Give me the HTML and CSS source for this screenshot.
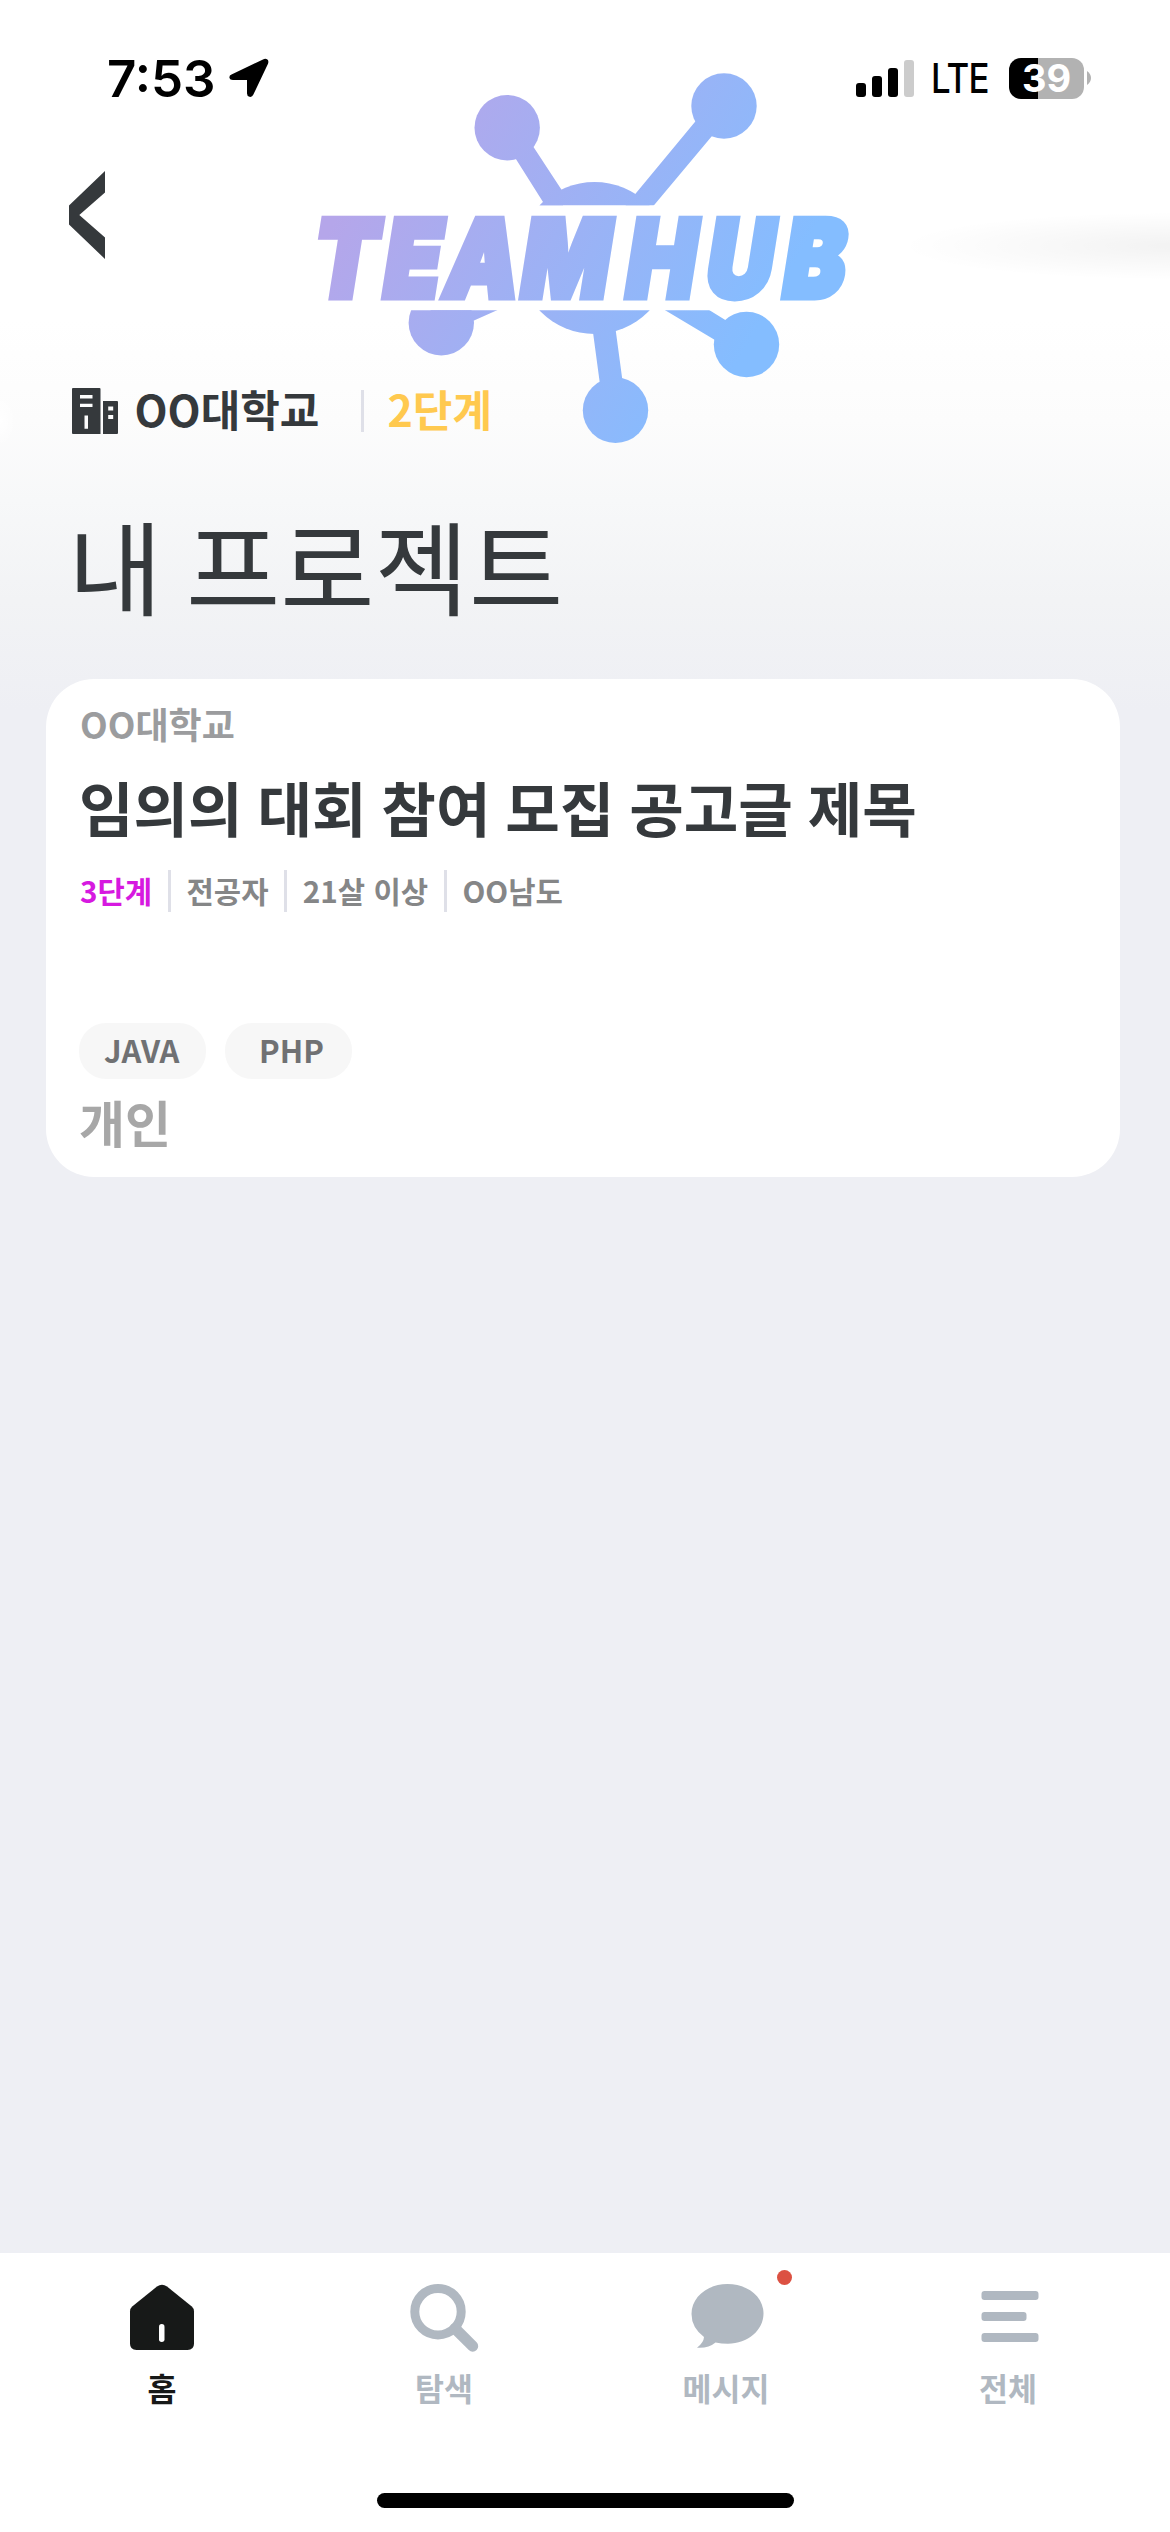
FILE: index.html
```html
<!DOCTYPE html>
<html lang="ko">
<head>
<meta charset="utf-8">
<title>TEAMHUB</title>
<link rel="stylesheet" href="styles.css">
</head>
<body>
<div class="screen">
  <header class="status-bar">
    <div class="status-left">
      <span class="clock">7:53</span>
      <svg class="location" width="40" height="40" viewBox="0 0 40 40"><path d="M2.5 16.6 34 1.4Q36.500 0 38.400 1.500 40 3 39 5.800L24.400 36.500Q23 39.500 20.500 38.800 18 38.300 18 35.500V22H4Q.8 22 .4 19.500 .2 17.600 2.500 16.600Z"/></svg>
    </div>
    <div class="status-right">
      <svg class="signal" width="58" height="37" viewBox="0 0 58 37"><rect y="23" width="10" height="14" rx="3"/><rect x="16" y="16" width="10" height="21" rx="3"/><rect x="32" y="8" width="10" height="29" rx="3"/><rect class="signal-off" x="48" width="10" height="37" rx="3"/></svg>
      <span class="network">LTE</span>
      <span class="battery">39</span>
      <svg class="battery-cap" width="4" height="14" viewBox="0 0 4 14"><path d="M0 0Q4 3 4 7T0 14Z"/></svg>
    </div>
  </header>

  <svg class="logo" width="540" height="380" viewBox="313 68 540 380">
    <defs>
      <linearGradient id="mark" gradientUnits="userSpaceOnUse" x1="346" y1="200" x2="710" y2="410"><stop offset="0" stop-color="#b5a6ea"/><stop offset="1" stop-color="#84bdff"/></linearGradient>
      <linearGradient id="word" gradientUnits="userSpaceOnUse" x1="346" y1="200" x2="710" y2="410" gradientTransform="scale(1.163 1) skewX(9) translate(0 -297)"><stop offset="0" stop-color="#b5a6ea"/><stop offset="1" stop-color="#84bdff"/></linearGradient>
      <clipPath id="bands"><path d="M313 68H853V205.300H313ZM313 310.300H853V448H313Z"/></clipPath>
    </defs>
    <g fill="url(#mark)" clip-path="url(#bands)">
      <circle cx="507.200" cy="127.700" r="32.700"/>
      <circle cx="724" cy="106" r="32.700"/>
      <circle cx="441.300" cy="322.700" r="32.700"/>
      <circle cx="746.500" cy="344.500" r="32.700"/>
      <circle cx="615.500" cy="410.300" r="32.700"/>
      <circle cx="594.500" cy="258" r="76"/>
      <path d="M507 145 525 134 563 192V210H536L543 202ZM704 111 717 130 650 210 622 210ZM425 300H520L474 320.500 441 330ZM648 300H693L735 326 730 349ZM592 325H615L624 392H601Z"/>
    </g>
    <text class="wordmark" fill="url(#word)" stroke="url(#word)" transform="translate(0 297) skewX(-9) scale(.86 1)" x="359.500 441.500 512.500 601.500 723.500 816.500 906">TEAMHUB</text>
  </svg>

  <main class="content">
    <nav class="back">
      <svg width="36" height="88" viewBox="0 0 36 88"><path d="M36 0V21.500L10.300 44 36 66.500V88L0 53.500V34.500Z"/></svg>
    </nav>
    <div class="school-row">
      <svg class="building" width="46" height="46" viewBox="0 0 46 46"><path fill-rule="evenodd" d="M1 0H27.500Q28.500 0 28.500 1V46H1Q0 46 0 45V1Q0 0 1 0ZM8 7V10.500H20.500V7ZM8 15.700V19H20.500V15.700ZM12.500 27.600V40.800H16V27.600ZM31 13H45Q46 13 46 14V45Q46 46 45 46H31ZM36.200 18.600V22.500H41.200V18.600ZM36.200 27V31H41.200V27Z"/></svg>
      <span class="school">OO대학교</span>
      <i class="divider"></i>
      <span class="level">2단계</span>
    </div>
    <h1 class="page-title">내 프로젝트</h1>
    <article class="card">
      <p class="card-school">OO대학교</p>
      <h2 class="card-title">임의의 대회 참여 모집 공고글 제목</h2>
      <div class="meta">
        <span class="meta-level">3단계</span><i class="divider"></i>
        <span>전공자</span><i class="divider"></i>
        <span>21살 이상</span><i class="divider"></i>
        <span>OO남도</span>
      </div>
      <div class="tags"><span class="tag">JAVA</span><span class="tag tag-php">PHP</span></div>
      <p class="kind">개인</p>
    </article>
  </main>

  <footer class="footer">
    <nav class="tabs">
      <a class="tab tab-active">
        <svg width="74" height="74" viewBox="0 0 74 74"><path d="M5 29.500Q5 26.500 7.200 24.600L32 4.500Q37 .8 42 4.500L66.800 24.600Q69 26.500 69 29.500V61.500Q69 68 62.500 68H11.500Q5 68 5 61.500Z"/><rect class="door" x="34" y="42" width="5.500" height="18" rx="2.700"/></svg>
        <span>홈</span>
      </a>
      <a class="tab">
        <svg width="74" height="74" viewBox="0 0 74 74"><g fill="none" stroke="currentColor"><circle cx="31" cy="29.700" r="23.200" stroke-width="9"/><path stroke-width="11" stroke-linecap="round" d="M48 46.500 65.700 64.200"/></g></svg>
        <span>탐색</span>
      </a>
      <a class="tab">
        <svg width="74" height="74" viewBox="0 0 74 74"><path d="M38.500 2C59 2 74.500 15 74.500 31.500S59 61.700 39 61.700Q32.500 61.700 26.500 60.500 19.500 66.500 8 65.700 14.800 60.500 15 55 2.500 45.500 2.500 32C2.500 15.500 18 2 38.500 2Z"/></svg>
        <span>메시지</span>
        <b class="unread"></b>
      </a>
      <a class="tab">
        <svg width="74" height="74" viewBox="0 0 74 74"><rect x="10.500" y="9" width="57" height="9" rx="3"/><rect x="10.500" y="30" width="45" height="9" rx="3"/><rect x="10.500" y="51" width="57" height="9" rx="3"/></svg>
        <span>전체</span>
      </a>
    </nav>
    <div class="home-indicator"></div>
  </footer>
</div>
</body>
</html>
```

FILE: styles.css
```css
* { box-sizing: border-box; }
body { margin: 0; font-family: "Noto Sans CJK KR", sans-serif; color: #35393c; }
h1, h2, p { margin: 0; }
svg { display: block; overflow: visible; flex: none; }

.screen {
  position: relative;
  display: flex;
  flex-direction: column;
  width: 1170px;
  height: 2532px;
  overflow: hidden;
  background:
    radial-gradient(ellipse 280px 34px at 1180px 246px, rgba(0,0,0,.05), rgba(0,0,0,0)) no-repeat,
    radial-gradient(ellipse 16px 26px at 0 420px, #fff, rgba(255,255,255,0)) no-repeat,
    linear-gradient(#fff 320px, #fcfcfc 420px, #f7f8f9 500px, #f2f3f5 600px, #eeeff4 710px);
}

.status-bar {
  display: flex;
  justify-content: space-between;
  height: 156px;
  padding: 0 79px 0 107px;
  font-family: Inter, sans-serif;
  color: #000;
}
.status-left, .status-right { display: flex; align-items: center; height: 156px; }
.clock { width: 122px; font-size: 51px; font-weight: 600; letter-spacing: 0; }
.network {
  width: 78px;
  margin-left: 17px;
  font-size: 41px;
  font-weight: 500;
  letter-spacing: -1px;
  transform: scaleX(.85);
  transform-origin: left;
}
.signal-off { fill: #ccc; }
.battery {
  width: 75px;
  height: 41px;
  border-radius: 12px;
  background: linear-gradient(90deg, #000 29px, #b2b2b2 29px);
  color: #fff;
  font-size: 38px;
  font-weight: 700;
  line-height: 41px;
  text-align: center;
}
.battery-cap { margin-left: 3px; fill: #b2b2b2; }

.logo { position: absolute; left: 313px; top: 68px; }
.wordmark {
  font-family: Inter, sans-serif;
  font-size: 107px;
  font-weight: 900;
  stroke-width: 7px;
  stroke-linejoin: miter;
  stroke-miterlimit: 2;
}

.content { flex: 1; padding: 15px 50px 0 46px; }
.back { padding-left: 23px; fill: #35393c; }
.school-row {
  display: flex;
  align-items: center;
  height: 64px;
  margin-top: 117px;
  padding-left: 25.500px;
  font-size: 43px;
  font-weight: 700;
  line-height: 64px;
}
.building { margin-top: 6px; fill: #35393c; }
.school { width: 226px; margin-left: 17px; }
.divider { width: 3px; height: 42px; background: #dfe0e8; }
.school-row .divider { margin-top: 6px; }
.level { margin-left: 24px; color: #ffc94f; }
.page-title {
  margin-top: 54px;
  padding-left: 22px;
  font-size: 102.500px;
  font-weight: 400;
  line-height: 140px;
  word-spacing: -5px;
}
.card {
  height: 498px;
  margin-top: 45px;
  padding: 20px 33px 0;
  border-radius: 48px;
  background: #fff;
}
.card-school { color: #9b9c9e; font-size: 36px; font-weight: 700; line-height: 48px; padding-left: 1px; }
.card-title { margin-top: 15px; font-size: 59.300px; font-weight: 700; line-height: 88px; word-spacing: -1.800px; }
.meta {
  display: flex;
  align-items: center;
  gap: 15.700px;
  height: 42px;
  margin-top: 20px;
  padding-left: 1px;
  color: #858687;
  font-size: 29.700px;
  font-weight: 700;
  line-height: 38px;
}
.meta-level { color: #d619e0; }
.tags { display: flex; gap: 19px; margin-top: 111px; }
.tag {
  width: 127px;
  height: 56px;
  padding-left: 25px;
  border-radius: 27px;
  background: #f7f7f7;
  color: #707173;
  font-size: 31px;
  font-weight: 700;
  line-height: 53px;
}
.tag-php { padding-left: 34px; }
.kind { margin-top: 7px; color: #a7a7a7; font-size: 50px; font-weight: 700; line-height: 70px; }

.footer { height: 279px; background: #fff; }
.tabs { display: grid; grid-template-columns: repeat(4, 282px); padding: 29px 21px 0; }
.tab {
  position: relative;
  display: flex;
  flex-direction: column;
  align-items: center;
  color: #b0b8c1;
  fill: currentColor;
  font-size: 31.500px;
  font-weight: 700;
  line-height: 44px;
}
.tab svg { margin-bottom: 9px; }
.tab-active { color: #171918; }
.door { fill: #fff; }
.unread {
  position: absolute;
  left: 192px;
  top: -12px;
  width: 15px;
  height: 15px;
  border-radius: 50%;
  background: #dc5142;
}
.home-indicator { width: 417px; height: 15px; margin: 84px auto 0; border-radius: 8px; background: #000; }
```
